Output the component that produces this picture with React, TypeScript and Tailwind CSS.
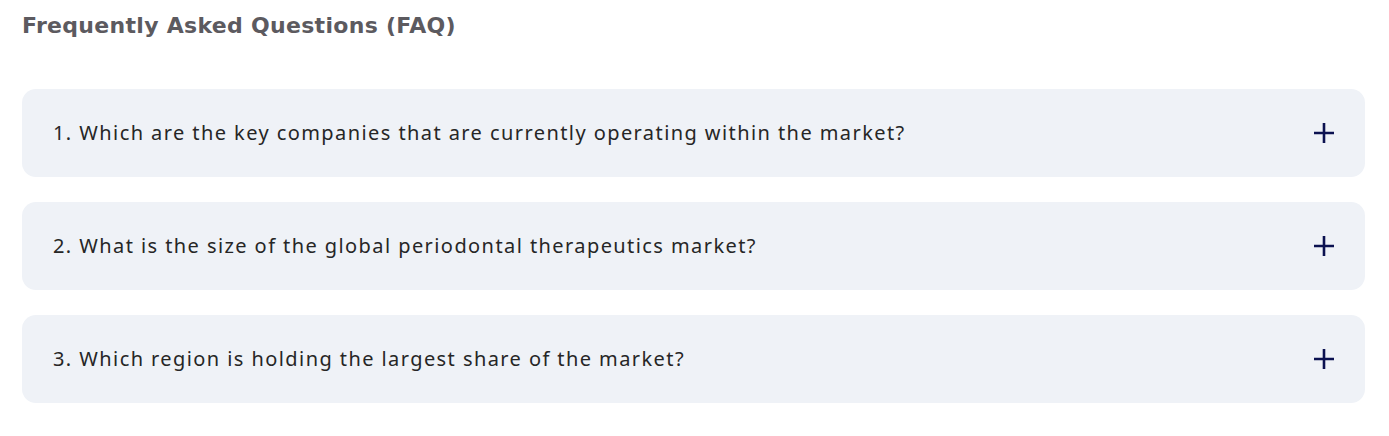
const faqs = [
  "1. Which are the key companies that are currently operating within the market?",
  "2. What is the size of the global periodontal therapeutics market?",
  "3. Which region is holding the largest share of the market?",
];

function PlusIcon() {
  return (
    <svg width="22" height="22" viewBox="0 0 22 22" className="text-[#0b1150]">
      <path d="M11 1v20M1 11h20" stroke="currentColor" strokeWidth="2.6" fill="none" />
    </svg>
  );
}

export default function App() {
  return (
    <div className="bg-white min-h-screen px-[22px] pt-[12px]">
      <h2 className="text-[22px] leading-[28px] font-bold text-[#5c5a5f] font-['DejaVu_Sans',sans-serif] tracking-[0.3px]">
        Frequently Asked Questions (FAQ)
      </h2>
      <div className="mt-[49px] flex flex-col gap-[25px] w-[1343px]">
        {faqs.map((q) => (
          <button
            key={q}
            className="flex h-[88px] items-center justify-between rounded-[14px] bg-[#eff2f7] pl-[31px] pr-[30px] text-left"
          >
            <span className="text-[20px] text-[#262626] font-['Noto_Sans',sans-serif] tracking-[1.42px]">
              {q}
            </span>
            <PlusIcon />
          </button>
        ))}
      </div>
    </div>
  );
}
